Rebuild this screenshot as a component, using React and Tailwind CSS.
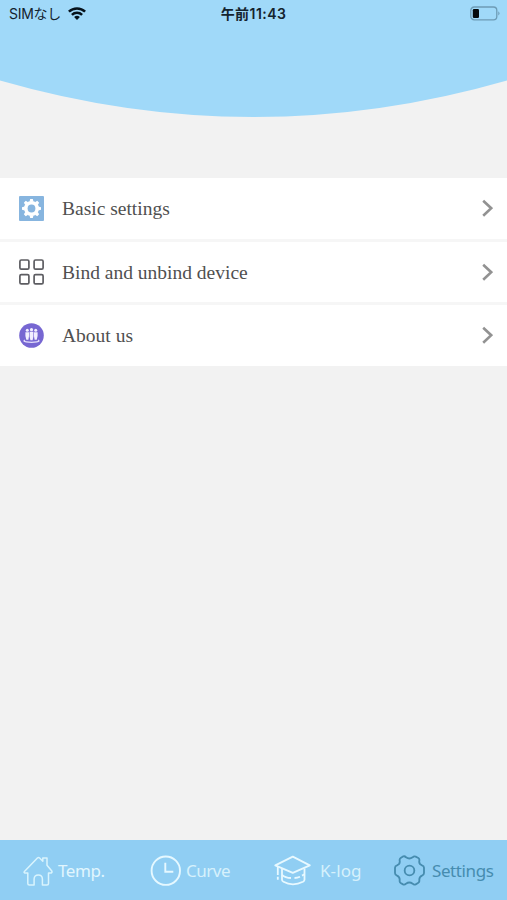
import React from "react";

function StatusBar() {
  return (
    <div className="grid h-[27px] grid-cols-3 items-center bg-[#a0d9f9] pl-[9px] pr-[7px] font-['Inter','Noto_Sans_CJK_JP',sans-serif] text-[#14232e]">
      <div className="flex items-center gap-[7px]">
        <span className="whitespace-nowrap text-[14px] leading-none tracking-[-0.3px]">SIMなし</span>
        <svg className="h-[13px] w-[18px]" viewBox="0 0 18 13" fill="none" stroke="#06121b" strokeWidth="2.5">
          <path d="M.9 4.7a11.6 11.6 0 0 1 16.2 0" />
          <path d="M3.9 7.9a7.3 7.3 0 0 1 10.2 0" />
          <path d="M6.1 10.1a4.1 4.1 0 0 1 5.8 0L9 13Z" fill="#06121b" stroke="none" />
        </svg>
      </div>
      <span className="whitespace-nowrap pr-[2px] text-center text-[14px] font-semibold leading-none tracking-[0.45px]">午前11:43</span>
      <svg className="h-[15px] w-[30px] justify-self-end" viewBox="0 0 30 15">
        <rect x=".8" y="1" width="26" height="12.8" rx="3.4" fill="none" stroke="#6d9bb5" strokeWidth="1.3" />
        <rect x="2.8" y="3" width="6.2" height="9" rx="1.2" fill="#05080b" />
        <path d="M28.3 5.2q2.4 2.2 0 4.4Z" fill="#6d9bb5" />
      </svg>
    </div>
  );
}

function BasicIcon() {
  return (
    <svg className="h-[25px] w-[25px]" viewBox="0 0 25 25">
      <rect width="25" height="25" rx="1" fill="#87b5df" />
      <g fill="#fff">
        <circle cx="12.5" cy="12.5" r="7.5" />
        {[0, 45, 90, 135, 180, 225, 270, 315].map((a) => (
          <path key={a} d="M10.5 5.8 11.2 3h2.6l.7 2.8Z" transform={`rotate(${a} 12.5 12.5)`} />
        ))}
      </g>
      <circle cx="12.5" cy="12.5" r="3.9" fill="#87b5df" />
    </svg>
  );
}

function GridIcon() {
  return (
    <svg className="h-[26px] w-[25px]" viewBox="0 0 25 26" fill="none" stroke="#5d5d62" strokeWidth="1.7">
      <rect x=".9" y="1" width="9" height="9.2" rx="1.4" />
      <rect x="15.1" y="1" width="9" height="9.2" rx="1.4" />
      <rect x=".9" y="15.6" width="9" height="9.2" rx="1.4" />
      <rect x="15.1" y="15.6" width="9" height="9.2" rx="1.4" />
    </svg>
  );
}

function AboutIcon() {
  return (
    <svg className="h-[25px] w-[25px]" viewBox="0 0 25 25">
      <circle cx="12.5" cy="12.5" r="12.3" fill="#7767d2" />
      <g fill="#f2efff">
        <circle cx="8.3" cy="7.3" r="1.5" />
        <circle cx="12.5" cy="6.7" r="1.6" />
        <circle cx="16.7" cy="7.3" r="1.5" />
        <path d="M6.4 9.2H10v4l-.6 3.6H7.3L6.4 13ZM10.6 8.7h3.8v4.8l-.8 3.8h-2.2l-.8-3.8ZM15 9.2h3.6V13l-.9 3.8h-2.1l-.6-3.6Z" />
      </g>
      <path d="M6 17q-2.4 1.4 1.2 1.9 5.3.8 10.6 0 3.6-.5 1.2-1.9" fill="none" stroke="#e5e0fb" strokeWidth="1.3" />
    </svg>
  );
}

function Row({ icon, label }) {
  return (
    <button className="flex h-[60.5px] w-full items-center bg-white pl-[19px] pr-[14px] text-left">
      {icon}
      <span className="ml-[18px] flex-1 pt-[1.5px] font-['Liberation_Serif',serif] text-[19.5px] leading-[20px] text-[#505050]">{label}</span>
      <svg className="h-[18px] w-[11px]" viewBox="0 0 11 18" fill="none" stroke="#929292" strokeWidth="2.6">
        <path d="m1.2 1.7 8 7.5-8 7.5" />
      </svg>
    </button>
  );
}

function HouseIcon() {
  return (
    <svg className="h-[30px] w-[30px]" viewBox="0 0 30 30" fill="none" stroke="#d9f4fd" strokeWidth="1.5" strokeLinejoin="round">
      <path d="M4.8 17H1.6Q.7 16.3 1.4 15.6L14.4 2q1.1-1 2.2 0l3.2 3.2V2.1H24v7.2l4.8 5.8q.6 1.2-.6 1.9h-2.7v10.5q0 1.5-1.5 1.5h-4.6V23q-.1-4-4.1-4t-4.2 4v6H6.3q-1.5 0-1.5-1.5Z" />
    </svg>
  );
}

function ClockIcon() {
  return (
    <svg className="h-[31px] w-[31px]" viewBox="0 0 31 31" fill="none" stroke="#e5f8ff" strokeWidth="1.9">
      <circle cx="15.8" cy="15.7" r="14.2" />
      <path d="M15.3 7.7v9h8" />
    </svg>
  );
}

function CapIcon() {
  return (
    <svg className="h-[31px] w-[37px]" viewBox="0 0 37 31" fill="none" stroke="#e8f9ff" strokeWidth="1.8" strokeLinejoin="round">
      <path d="M1.3 10.4 18.8 1.6l17 8.8-17 7.4Z" />
      <path d="M8 13.6v11.2q0 1.2 1.5 2 9.2 5 19.5 0 1.5-.8 1.5-2V13.6" />
      <path d="M8 19.8q3.2 3 9 3.2M20.5 23q3-.1 5.5-1.2M28 20.6l2.5-1.3" />
      <path d="M3.8 11.8v8.2M3.8 21.8v3" />
    </svg>
  );
}

function GearIcon() {
  return (
    <svg className="h-[31px] w-[31px]" viewBox="0 0 93 93" fill="none" stroke="#468caf" strokeWidth="5.5" strokeLinejoin="round">
      <path d="M28 4Q33 3 36 7Q46 14 56 7Q60 3 65 5L73 9Q77 12 76 17Q74 27 84 31Q90 33 90 38V54Q90 60 84 62Q75 66 76 76Q77 81 72 84L65 88Q60 90 56 86Q46 79 36 86Q32 90 27 88L20 84Q16 81 17 76Q18 66 9 62Q3 60 3 54V38Q3 33 9 31Q19 27 17 17Q16 12 20 9Z" />
      <circle cx="46.5" cy="46.5" r="14.5" />
    </svg>
  );
}

const tabText = "font-['Noto_Sans','Open_Sans',sans-serif] text-[17px] leading-none whitespace-nowrap";

export default function App() {
  return (
    <main className="flex h-[900px] w-[507px] flex-col overflow-hidden bg-[#f2f2f2]">
      <StatusBar />
      <header className="h-[151px]">
        <svg className="block h-[90px] w-full" viewBox="0 0 507 90">
          <path d="M0 0h507v53.5Q253.5 126.5 0 53.5Z" fill="#a0d9f9" />
        </svg>
      </header>
      <section className="flex flex-col gap-[3px] bg-[#f6f6f6]">
        <Row icon={<BasicIcon />} label="Basic settings" />
        <Row icon={<GridIcon />} label="Bind and unbind device" />
        <Row icon={<AboutIcon />} label="About us" />
      </section>
      <nav className="mt-auto flex h-[60px] items-center bg-[#90cef3] pb-px pt-[2px]">
        <div className="flex w-[127px] items-center gap-[5px] pl-[23px] text-[#e1f6fe]">
          <HouseIcon />
          <span className={`${tabText} tracking-[-0.4px]`}>Temp.</span>
        </div>
        <div className="flex w-[127px] items-center gap-[5px] pl-[23px] text-[#d6f1fc]">
          <ClockIcon />
          <span className={`${tabText} tracking-[-0.5px]`}>Curve</span>
        </div>
        <div className="flex w-[127px] items-center gap-[9px] pl-[20px] text-[#d6f1fc]">
          <CapIcon />
          <span className={`${tabText} tracking-[0.1px]`}>K-log</span>
        </div>
        <div className="flex w-[126px] items-center gap-[7px] pl-[13px] text-[#468caf]">
          <GearIcon />
          <span className={`${tabText} tracking-[-0.4px]`}>Settings</span>
        </div>
      </nav>
    </main>
  );
}
